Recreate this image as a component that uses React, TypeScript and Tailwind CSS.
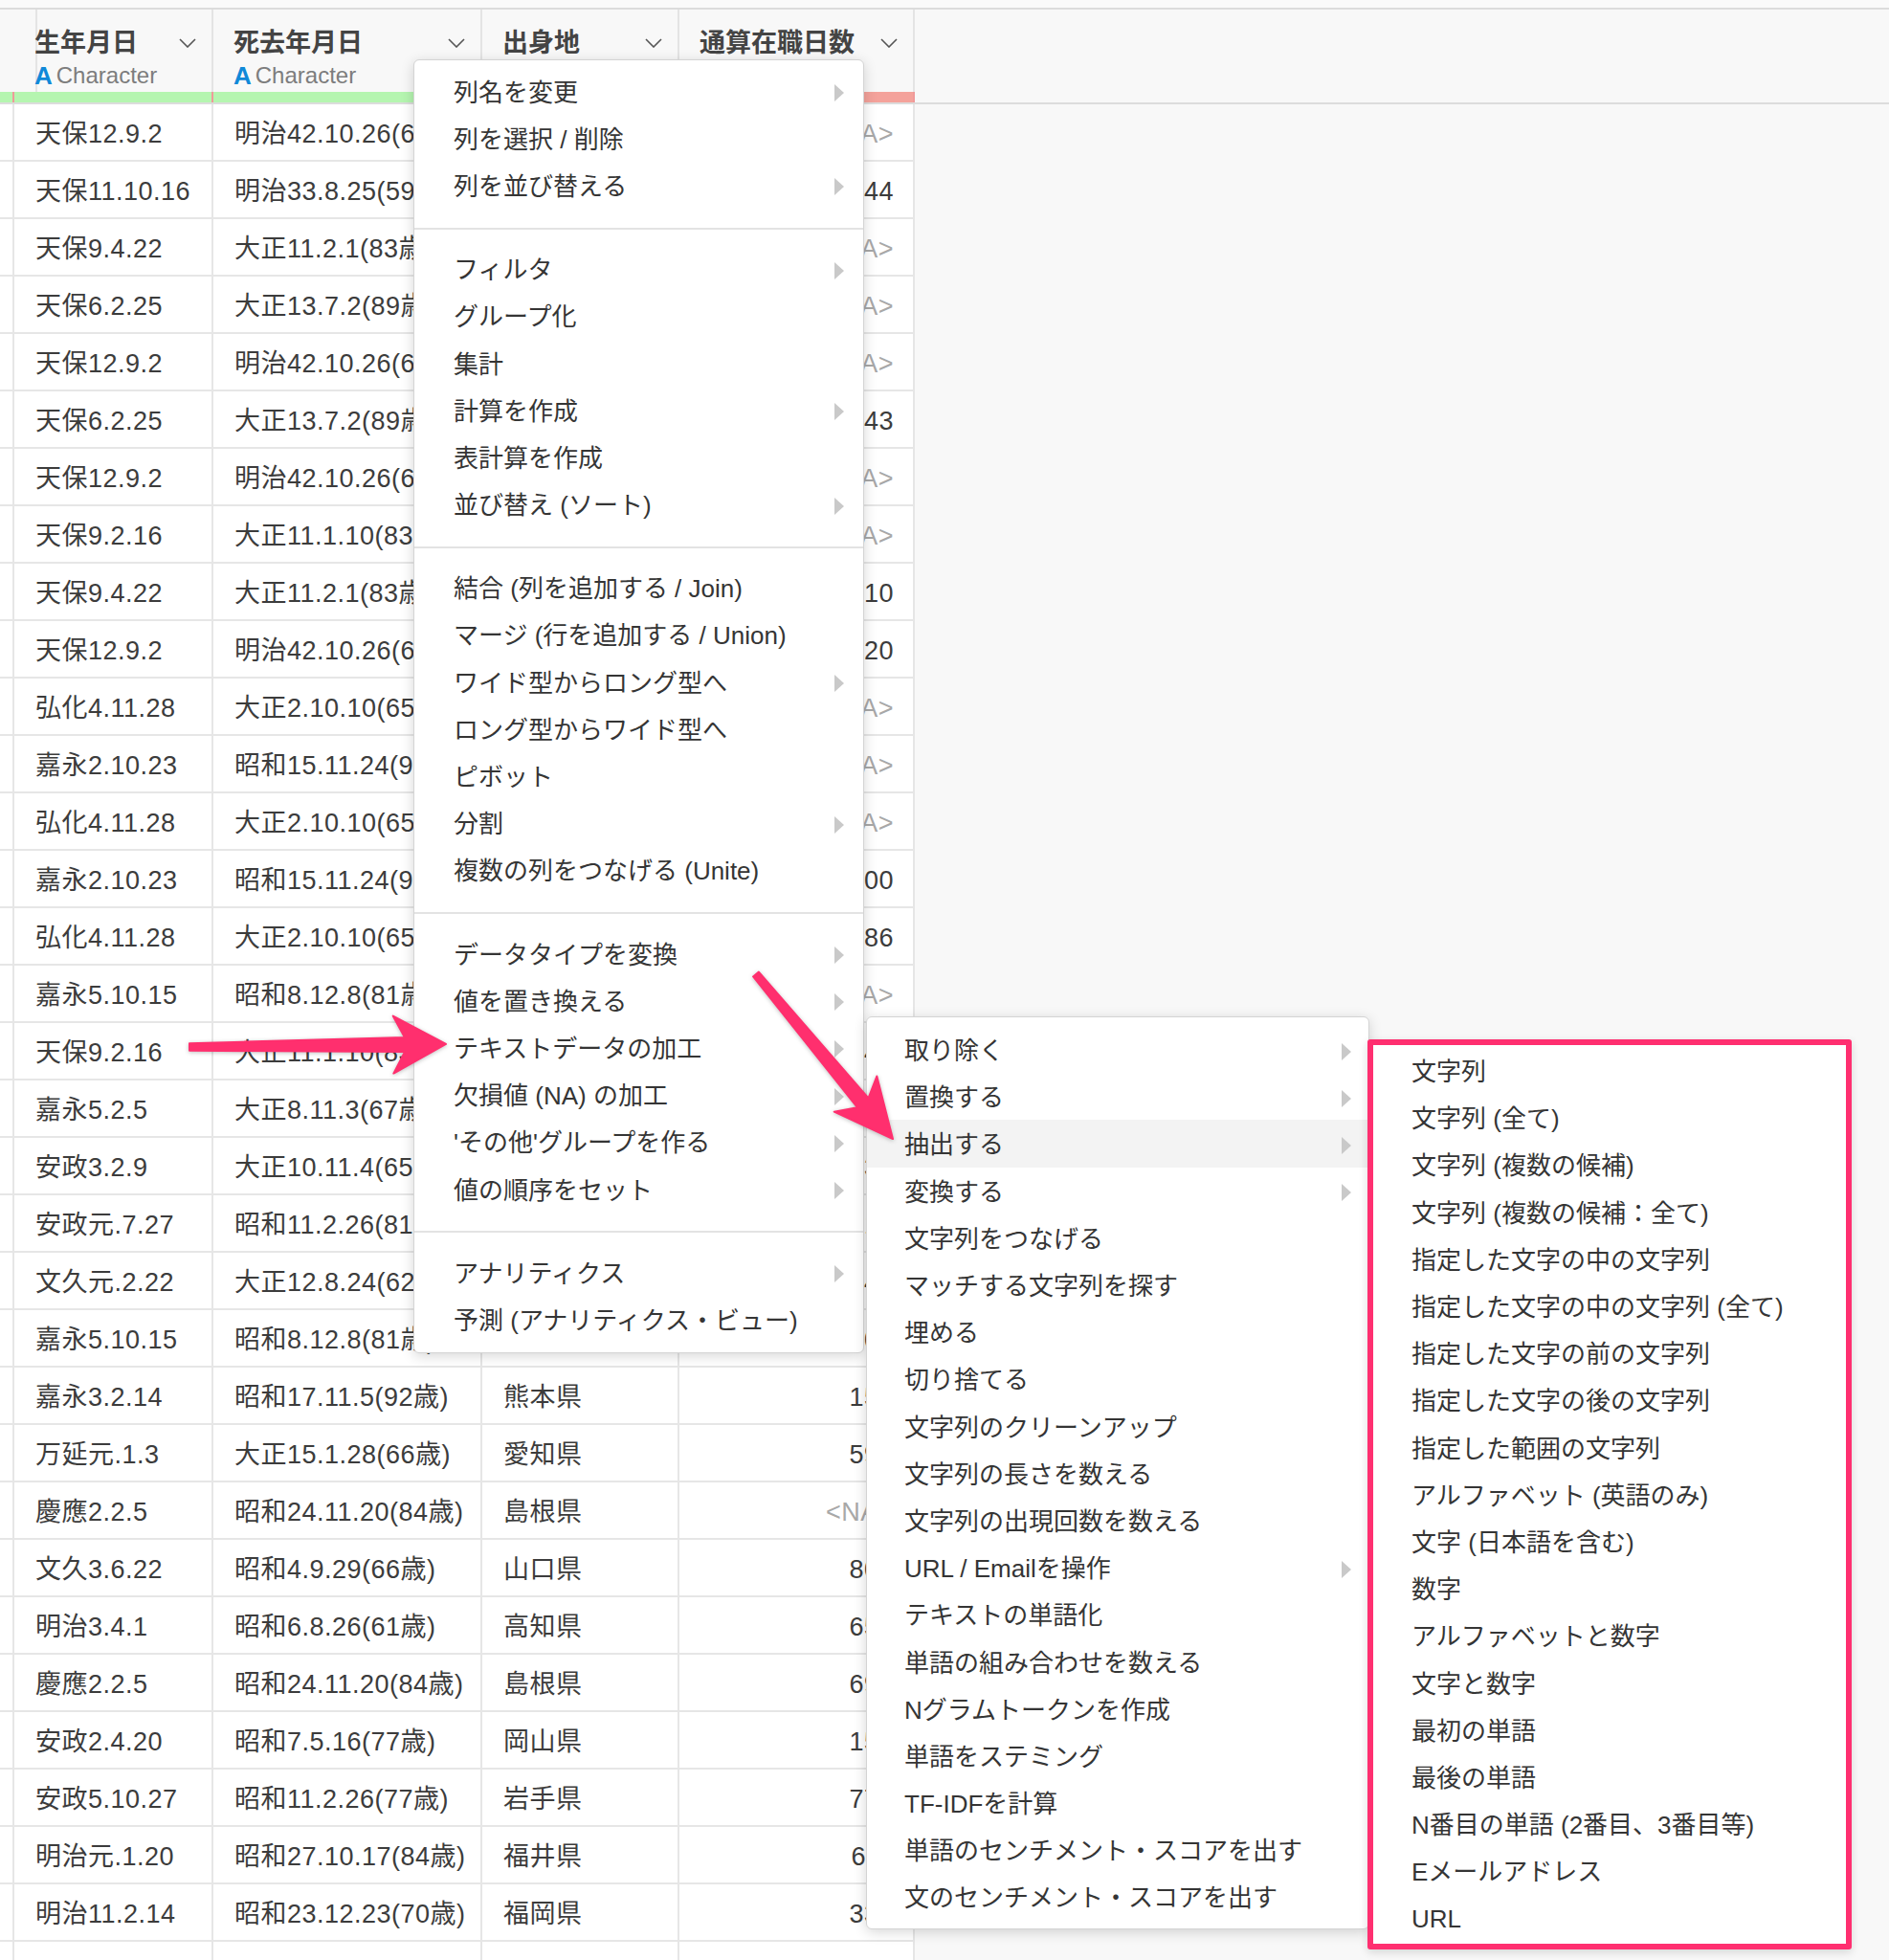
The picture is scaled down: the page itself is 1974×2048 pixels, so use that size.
import React from 'react';

type Row = [string, string, string, string];

const rows: Row[] = [
  ['天保12.9.2', '明治42.10.26(68歳)', '山口県', '<NA>'],
  ['天保11.10.16', '明治33.8.25(59歳)', '鹿児島県', '544'],
  ['天保9.4.22', '大正11.2.1(83歳)', '山口県', '<NA>'],
  ['天保6.2.25', '大正13.7.2(89歳)', '鹿児島県', '<NA>'],
  ['天保12.9.2', '明治42.10.26(68歳)', '山口県', '<NA>'],
  ['天保6.2.25', '大正13.7.2(89歳)', '鹿児島県', '943'],
  ['天保12.9.2', '明治42.10.26(68歳)', '山口県', '<NA>'],
  ['天保9.2.16', '大正11.1.10(83歳)', '佐賀県', '<NA>'],
  ['天保9.4.22', '大正11.2.1(83歳)', '山口県', '1210'],
  ['天保12.9.2', '明治42.10.26(68歳)', '山口県', '2720'],
  ['弘化4.11.28', '大正2.10.10(65歳)', '山口県', '<NA>'],
  ['嘉永2.10.23', '昭和15.11.24(90歳)', '京都府', '<NA>'],
  ['弘化4.11.28', '大正2.10.10(65歳)', '山口県', '<NA>'],
  ['嘉永2.10.23', '昭和15.11.24(90歳)', '京都府', '1400'],
  ['弘化4.11.28', '大正2.10.10(65歳)', '山口県', '2886'],
  ['嘉永5.10.15', '昭和8.12.8(81歳)', '鹿児島県', '<NA>'],
  ['天保9.2.16', '大正11.1.10(83歳)', '佐賀県', '1040'],
  ['嘉永5.2.5', '大正8.11.3(67歳)', '山口県', '721'],
  ['安政3.2.9', '大正10.11.4(65歳)', '岩手県', '1133'],
  ['安政元.7.27', '昭和11.2.26(81歳)', '東京都', '212'],
  ['文久元.2.22', '大正12.8.24(62歳)', '広島県', '440'],
  ['嘉永5.10.15', '昭和8.12.8(81歳)', '鹿児島県', '702'],
  ['嘉永3.2.14', '昭和17.11.5(92歳)', '熊本県', '157'],
  ['万延元.1.3', '大正15.1.28(66歳)', '愛知県', '597'],
  ['慶應2.2.5', '昭和24.11.20(84歳)', '島根県', '<NA>'],
  ['文久3.6.22', '昭和4.9.29(66歳)', '山口県', '805'],
  ['明治3.4.1', '昭和6.8.26(61歳)', '高知県', '652'],
  ['慶應2.2.5', '昭和24.11.20(84歳)', '島根県', '690'],
  ['安政2.4.20', '昭和7.5.16(77歳)', '岡山県', '156'],
  ['安政5.10.27', '昭和11.2.26(77歳)', '岩手県', '774'],
  ['明治元.1.20', '昭和27.10.17(84歳)', '福井県', '611'],
  ['明治11.2.14', '昭和23.12.23(70歳)', '福岡県', '331'],
  ['', '', '', ''],
];

type Item = { label: string; sub?: boolean; active?: boolean };

const mainGroups: Item[][] = [
  [{ label: '列名を変更', sub: true }, { label: '列を選択 / 削除' }, { label: '列を並び替える', sub: true }],
  [
    { label: 'フィルタ', sub: true },
    { label: 'グループ化' },
    { label: '集計' },
    { label: '計算を作成', sub: true },
    { label: '表計算を作成' },
    { label: '並び替え (ソート)', sub: true },
  ],
  [
    { label: '結合 (列を追加する / Join)' },
    { label: 'マージ (行を追加する / Union)' },
    { label: 'ワイド型からロング型へ', sub: true },
    { label: 'ロング型からワイド型へ' },
    { label: 'ピボット' },
    { label: '分割', sub: true },
    { label: '複数の列をつなげる (Unite)' },
  ],
  [
    { label: 'データタイプを変換', sub: true },
    { label: '値を置き換える', sub: true },
    { label: 'テキストデータの加工', sub: true },
    { label: '欠損値 (NA) の加工', sub: true },
    { label: "'その他'グループを作る", sub: true },
    { label: '値の順序をセット', sub: true },
  ],
  [{ label: 'アナリティクス', sub: true }, { label: '予測 (アナリティクス・ビュー)' }],
];

const textItems: Item[] = [
  { label: '取り除く', sub: true },
  { label: '置換する', sub: true },
  { label: '抽出する', sub: true, active: true },
  { label: '変換する', sub: true },
  { label: '文字列をつなげる' },
  { label: 'マッチする文字列を探す' },
  { label: '埋める' },
  { label: '切り捨てる' },
  { label: '文字列のクリーンアップ' },
  { label: '文字列の長さを数える' },
  { label: '文字列の出現回数を数える' },
  { label: 'URL / Emailを操作', sub: true },
  { label: 'テキストの単語化' },
  { label: '単語の組み合わせを数える' },
  { label: 'Nグラムトークンを作成' },
  { label: '単語をステミング' },
  { label: 'TF-IDFを計算' },
  { label: '単語のセンチメント・スコアを出す' },
  { label: '文のセンチメント・スコアを出す' },
];

const extractItems = [
  '文字列',
  '文字列 (全て)',
  '文字列 (複数の候補)',
  '文字列 (複数の候補：全て)',
  '指定した文字の中の文字列',
  '指定した文字の中の文字列 (全て)',
  '指定した文字の前の文字列',
  '指定した文字の後の文字列',
  '指定した範囲の文字列',
  'アルファベット (英語のみ)',
  '文字 (日本語を含む)',
  '数字',
  'アルファベットと数字',
  '文字と数字',
  '最初の単語',
  '最後の単語',
  'N番目の単語 (2番目、3番目等)',
  'Eメールアドレス',
  'URL',
];

function Caret() {
  return (
    <svg width="10" height="18" viewBox="0 0 10 18">
      <polygon points="0,0 10,9 0,18" fill="#c9c9c9" />
    </svg>
  );
}

function Chevron() {
  return (
    <svg width="18" height="10" viewBox="0 0 18 10" fill="none">
      <polyline points="1,1 9,9 17,1" stroke="#555" strokeWidth="1.6" />
    </svg>
  );
}

function MenuRow({ item }: { item: Item }) {
  return (
    <div
      className={`flex h-[49.2px] items-center justify-between pl-[41px] pr-[20px] pt-[5px] text-[26px] text-[#353535] ${
        item.active ? 'bg-[#f3f3f3]' : ''
      }`}
    >
      <span className="whitespace-nowrap">{item.label}</span>
      {item.sub && <Caret />}
    </div>
  );
}

// tapered annotation arrow
function arrowPoints(x1: number, y1: number, x2: number, y2: number, headLen: number, headHalf: number) {
  const L = Math.hypot(x2 - x1, y2 - y1);
  const ux = (x2 - x1) / L;
  const uy = (y2 - y1) / L;
  const px = -uy;
  const py = ux;
  const notch = 12;
  const neck = 7.5;
  const tail = 3.8;
  const bx = x2 - ux * headLen;
  const by = y2 - uy * headLen;
  const nx = x2 - ux * (headLen - notch);
  const ny = y2 - uy * (headLen - notch);
  const pts = [
    [x1 + px * tail, y1 + py * tail],
    [nx + px * neck, ny + py * neck],
    [bx + px * headHalf, by + py * headHalf],
    [x2, y2],
    [bx - px * headHalf, by - py * headHalf],
    [nx - px * neck, ny - py * neck],
    [x1 - px * tail, y1 - py * tail],
  ];
  return pts.map((p) => p.join(',')).join(' ');
}

const cols = [
  { w: 'w-[15px]', title: '', sub: '' },
  { w: 'w-[208px]', title: '生年月日', sub: 'Character' },
  { w: 'w-[281px]', title: '死去年月日', sub: 'Character' },
  { w: 'w-[206px]', title: '出身地', sub: 'Character' },
  { w: 'w-[246px]', title: '通算在職日数', sub: 'Integer' },
];

export default function App() {
  return (
    <div className="relative h-[2048px] w-[1974px] overflow-hidden bg-[#f8f8f8] font-['Liberation_Sans','Noto_Sans_CJK_JP',sans-serif]">
      <div className="h-[8px] bg-[#fafafa]" />

      {/* header */}
      <div className="flex border-y-2 border-[#dcdcdc] bg-[#f8f8f8]">
        {cols.map((c, i) => (
          <div key={i} className={`flex shrink-0 flex-col ${c.w}`}>
            <div className="flex h-[86px] flex-col border-r-2 border-[#e4e4e4] pl-[21px] pr-[16px] pt-[19px]">
              {c.title && (
                <>
                  <div className="flex h-[32px] items-center justify-between">
                    <span className="whitespace-nowrap text-[27px] font-bold text-[#444]">{c.title}</span>
                    <Chevron />
                  </div>
                  <div className="mt-[6px] flex h-[24px] items-center">
                    <span className="text-[26px] font-black leading-none text-[#1089d8]">{i === 4 ? '#' : 'A'}</span>
                    <span className="ml-[4px] text-[24px] leading-none text-[#7d7d7d]">{c.sub}</span>
                  </div>
                </>
              )}
            </div>
            <div className={`h-[11px] border-r-2 border-[#ef9a9a] ${i === 4 ? 'bg-[#f4a29b]' : 'bg-[#b5f5b0]'}`} />
          </div>
        ))}
        <div className="flex-1" />
      </div>

      {/* rows */}
      <div className="w-[956px]">
        {rows.map((r, ri) => (
          <div key={ri} className="flex h-[60px] border-b-2 border-[#e6e6e6] bg-white pt-[5px] text-[27px] tracking-[0.5px] text-[#3c3c3c]">
            <div className="-mt-[5px] w-[15px] shrink-0 border-r-2 border-[#e6e6e6]" />
            <div className="-mt-[5px] flex w-[208px] shrink-0 items-center overflow-hidden whitespace-nowrap border-r-2 border-[#e6e6e6] pl-[22px] pt-[5px]">
              {r[0]}
            </div>
            <div className="-mt-[5px] flex w-[281px] shrink-0 items-center overflow-hidden whitespace-nowrap border-r-2 border-[#e6e6e6] pl-[22px] pt-[5px]">
              {r[1]}
            </div>
            <div className="-mt-[5px] flex w-[206px] shrink-0 items-center overflow-hidden whitespace-nowrap border-r-2 border-[#e6e6e6] pl-[22px] pt-[5px]">
              {r[2]}
            </div>
            <div
              className={`-mt-[5px] flex w-[246px] shrink-0 items-center justify-end overflow-hidden whitespace-nowrap border-r-2 border-[#e6e6e6] pr-[20px] pt-[5px] ${
                r[3] === '<NA>' ? 'text-[#a8a8a8]' : ''
              }`}
            >
              {r[3]}
            </div>
          </div>
        ))}
      </div>

      {/* column menu */}
      <div className="absolute left-[432px] top-[62px] w-[471px] rounded-[6px] border border-[#d4d4d4] bg-white pb-[10px] pt-[7px] shadow-[0_3px_14px_rgba(0,0,0,0.16)]">
        {mainGroups.map((g, gi) => (
          <div key={gi}>
            {gi > 0 && <div className="mb-[16px] mt-[20px] h-[2px] bg-[#e3e3e3]" />}
            {g.map((it) => (
              <MenuRow key={it.label} item={it} />
            ))}
          </div>
        ))}
      </div>

      {/* text processing submenu */}
      <div className="absolute left-[905px] top-[1062px] w-[526px] rounded-[6px] border border-[#d4d4d4] bg-white pb-[8px] pt-[9px] shadow-[0_3px_14px_rgba(0,0,0,0.16)]">
        {textItems.map((it) => (
          <div
            key={it.label}
            className={`flex h-[49.2px] items-center justify-between pl-[39px] pr-[18px] pt-[4px] text-[26px] text-[#353535] ${
              it.active ? 'bg-[#f3f3f3]' : ''
            }`}
          >
            <span className="whitespace-nowrap">{it.label}</span>
            {it.sub && <Caret />}
          </div>
        ))}
      </div>

      {/* extract submenu, highlighted */}
      <div className="absolute left-[1429px] top-[1086px] h-[951px] w-[506px] rounded-[3px] border-[6px] border-[#ff2f70] bg-white pt-[2px] shadow-[0_3px_10px_rgba(0,0,0,0.14)]">
        {extractItems.map((t) => (
          <div key={t} className="flex h-[49.2px] items-center whitespace-nowrap pl-[40px] pt-[4px] text-[26px] text-[#353535]">
            {t}
          </div>
        ))}
      </div>

      {/* annotation arrows */}
      <svg
        className="pointer-events-none absolute inset-0 drop-shadow-[0_1px_2px_rgba(0,0,0,0.25)]"
        width="1974"
        height="2048"
        viewBox="0 0 1974 2048"
      >
        <polygon points={arrowPoints(198, 1094, 466, 1091, 55, 30)} fill="#ff2f6e" strokeLinejoin="round" stroke="#ff2f6e" strokeWidth="2" />
        <polygon points={arrowPoints(790, 1018, 933, 1190, 61, 29)} fill="#ff2f6e" strokeLinejoin="round" stroke="#ff2f6e" strokeWidth="2" />
      </svg>
    </div>
  );
}
